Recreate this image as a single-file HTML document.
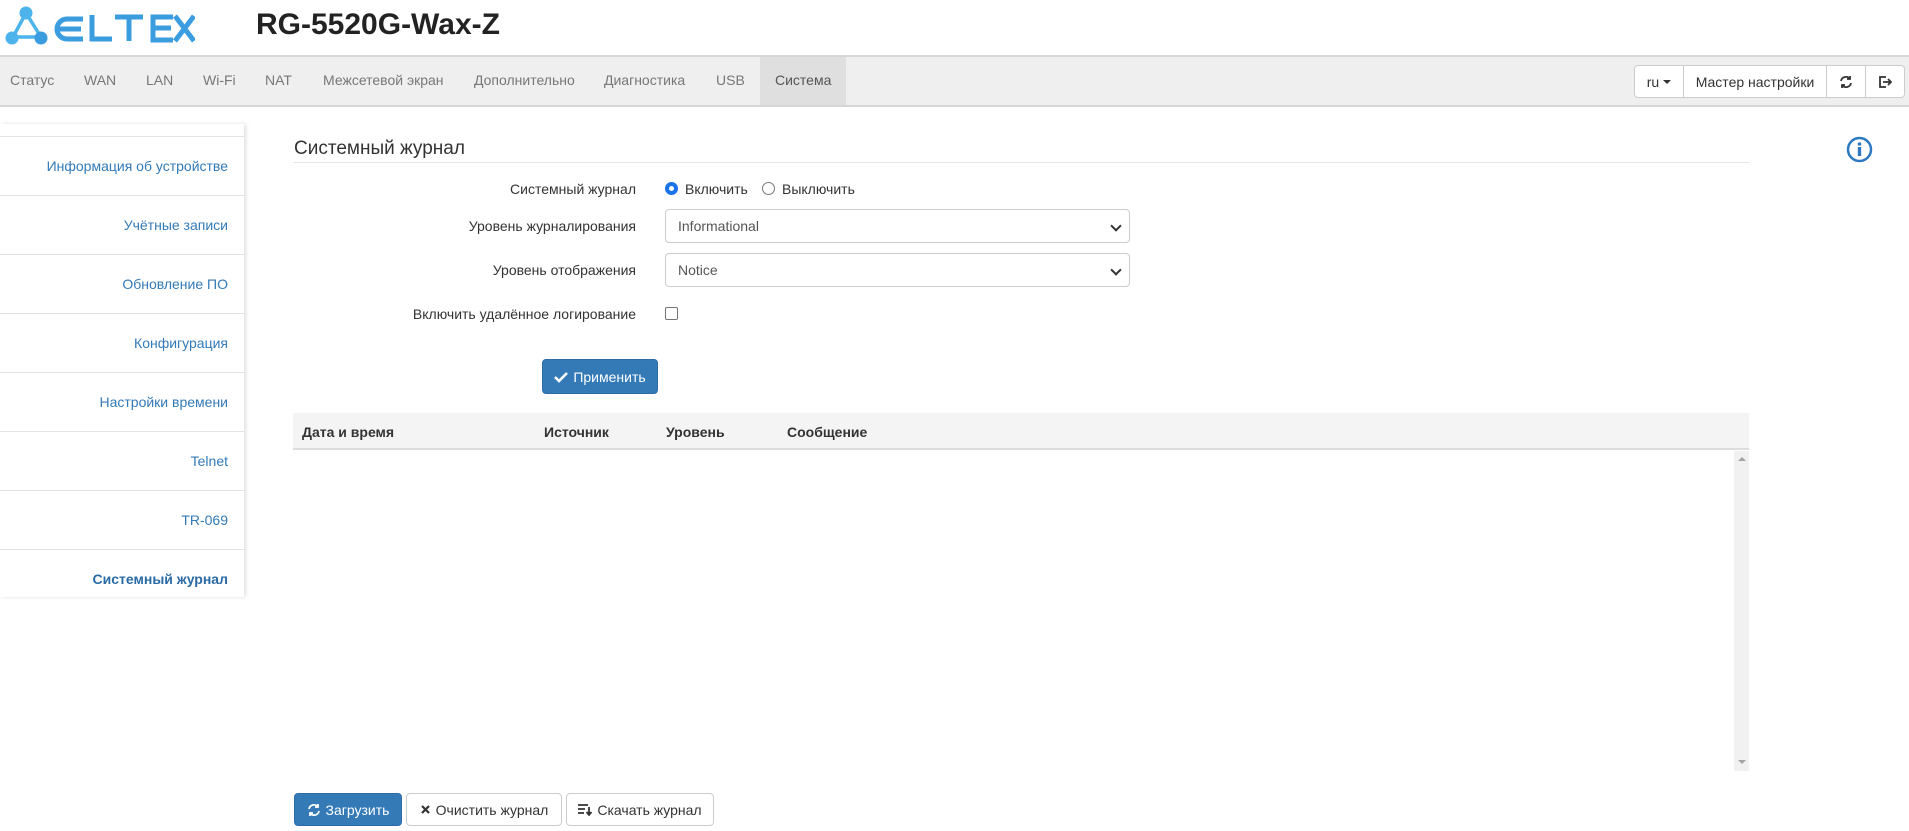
<!DOCTYPE html>
<html><head><meta charset="utf-8"><style>
*{box-sizing:border-box;margin:0;padding:0}
body{width:1909px;height:831px;background:#fff;font-family:"Liberation Sans",Arial,sans-serif;font-size:14px;color:#333;position:relative;overflow:hidden}
.a{position:absolute}
.nav{left:0;top:55px;width:1909px;height:52px;background:#efefef;border-top:2px solid #d6d6d6;border-bottom:2px solid #d6d6d6}
.nav span{position:absolute;top:15px;color:#777;font-size:14px}
.act{left:760px;top:0;width:86px;height:48px;background:#dfdfdf}
.rb{top:8px;height:33px;border:1px solid #ccc;background:#fff;display:flex;align-items:center;justify-content:center;font-size:14px;color:#333}
.side{left:0;top:124px;width:244px;height:473px;box-shadow:2px 0 4px rgba(0,0,0,.12)}
.si{position:absolute;left:0;width:244px;height:59px;border-top:1px solid #e3e3e3;text-align:right;padding-right:16px;line-height:58px;color:#337ab7;font-size:14px}
.lbl{position:absolute;right:calc(1909px - 636px);font-size:14px;color:#333}
.sel{position:absolute;left:665px;width:465px;height:34px;border:1px solid #ccc;border-radius:4px;padding:0 12px;line-height:32px;font-size:14px;color:#555;background:#fff}
.sel:after{content:"";position:absolute;right:9px;top:12px;width:6px;height:6px;border-right:2px solid #333;border-bottom:2px solid #333;transform:rotate(45deg)}
.btn{position:absolute;top:793px;height:33px;border:1px solid #ccc;border-radius:4px;display:flex;align-items:center;justify-content:center;font-size:14px;color:#333;background:#fff;gap:5px}
.th{position:absolute;top:11px;font-weight:bold;font-size:14px;color:#333}
</style></head><body>
<svg class="a" style="left:5px;top:5px" width="190" height="42" viewBox="0 0 190 42">
<g stroke="#4cb4ea" stroke-width="3.5" fill="none"><line x1="21" y1="8" x2="8" y2="32"/><line x1="21" y1="8" x2="36" y2="32"/><line x1="8" y1="32" x2="36" y2="32"/></g>
<circle cx="21" cy="8" r="6.5" fill="#4cb4ea"/><circle cx="7" cy="33" r="6.5" fill="#4cb4ea"/><circle cx="36" cy="33" r="6.5" fill="#3a9de0"/>
<g stroke="#3b9ce0" stroke-width="5" fill="none" stroke-linecap="butt">
<path d="M78 14H62a10 10 0 0 0 0 20h16M52 24h24"/>
<path d="M87 10v24h20"/>
<path d="M110 12h28M124 12v24"/>
<path d="M168 12h-20v23h20M148 23h18"/>
<path d="M170 11l19 25M189 11l-19 25"/>
</g></svg>
<div class="a" style="left:256px;top:8px;font-size:30px;font-weight:bold;color:#222">RG-5520G-Wax-Z</div>
<div class="a nav">
<div class="a act"></div>
<span style="left:10px">Статус</span><span style="left:84px">WAN</span><span style="left:146px">LAN</span><span style="left:203px">Wi-Fi</span><span style="left:265px">NAT</span><span style="left:323px">Межсетевой экран</span><span style="left:474px">Дополнительно</span><span style="left:604px">Диагностика</span><span style="left:716px">USB</span><span style="left:775px;color:#555">Система</span>
<div class="a rb" style="left:1634px;width:50px;border-radius:4px 0 0 4px">ru <span style="position:static;margin-left:4px;border-left:4px solid transparent;border-right:4px solid transparent;border-top:4px solid #333"></span></div>
<div class="a rb" style="left:1683px;width:144px">Мастер настройки</div>
<div class="a rb" style="left:1826px;width:40px"><svg width="14" height="14" viewBox="0 0 14 14" fill="none" stroke="#333" stroke-width="1.8"><path d="M2 6a5 5 0 0 1 9-2M12 8a5 5 0 0 1-9 2"/><path d="M11 1v3H8M3 13v-3h3"/></svg></div>
<div class="a rb" style="left:1865px;width:40px;border-radius:0 4px 4px 0"><svg width="14" height="14" viewBox="0 0 14 14" fill="none" stroke="#333" stroke-width="1.8"><path d="M8 2H2v10h6M5 7h8M10 4l3 3-3 3"/></svg></div>
</div>
<div class="a side">
<div class="si" style="top:12px">Информация об устройстве</div>
<div class="si" style="top:71px">Учётные записи</div>
<div class="si" style="top:130px">Обновление ПО</div>
<div class="si" style="top:189px">Конфигурация</div>
<div class="si" style="top:248px">Настройки времени</div>
<div class="si" style="top:307px">Telnet</div>
<div class="si" style="top:366px">TR-069</div>
<div class="si" style="top:425px;font-weight:bold;color:#2a6aa5">Системный журнал</div>
</div>
<div class="a" style="left:294px;top:138px;font-size:19px;color:#333">Системный журнал</div>
<div class="a" style="left:293px;top:162px;width:1456px;height:1px;background:#e5e5e5"></div>
<svg class="a" style="left:1846px;top:136px" width="27" height="27" viewBox="0 0 27 27"><circle cx="13.5" cy="13.5" r="11.5" fill="none" stroke="#2d7ac0" stroke-width="2.5"/><circle cx="13.5" cy="8" r="1.8" fill="#2d7ac0"/><rect x="11.8" y="11" width="3.4" height="9" fill="#2d7ac0"/></svg>
<div class="lbl" style="top:181px">Системный журнал</div>
<div class="a" style="left:665px;top:182px;width:13px;height:13px;border-radius:50%;border:4px solid #1a73e8;background:#fff"></div>
<div class="a" style="left:685px;top:181px">Включить</div>
<div class="a" style="left:762px;top:182px;width:13px;height:13px;border-radius:50%;border:1px solid #767676"></div>
<div class="a" style="left:782px;top:181px">Выключить</div>
<div class="lbl" style="top:218px">Уровень журналирования</div>
<div class="sel" style="top:209px">Informational</div>
<div class="lbl" style="top:262px">Уровень отображения</div>
<div class="sel" style="top:253px">Notice</div>
<div class="lbl" style="top:306px">Включить удалённое логирование</div>
<div class="a" style="left:665px;top:307px;width:13px;height:13px;border:1px solid #767676;border-radius:2px"></div>
<div class="btn" style="left:542px;top:359px;width:116px;height:35px;background:#337ab7;border-color:#2e6da4;color:#fff"><svg width="14" height="12" viewBox="0 0 14 12"><path d="M1 6l4 4 8-8" fill="none" stroke="#fff" stroke-width="2.6"/></svg>Применить</div>
<div class="a" style="left:293px;top:413px;width:1456px;height:37px;background:#f4f4f4;border-bottom:2px solid #ddd">
<span class="th" style="left:9px">Дата и время</span><span class="th" style="left:251px">Источник</span><span class="th" style="left:373px">Уровень</span><span class="th" style="left:494px">Сообщение</span>
</div>
<div class="a" style="left:1734px;top:451px;width:15px;height:320px;background:#f1f1f1">
<div class="a" style="left:4px;top:6px;border-left:4px solid transparent;border-right:4px solid transparent;border-bottom:4px solid #a3a3a3"></div>
<div class="a" style="left:4px;top:309px;border-left:4px solid transparent;border-right:4px solid transparent;border-top:4px solid #a3a3a3"></div>
</div>
<div class="btn" style="left:294px;width:108px;background:#337ab7;border-color:#2e6da4;color:#fff"><svg width="14" height="14" viewBox="0 0 14 14" fill="none" stroke="#fff" stroke-width="1.8"><path d="M2 6a5 5 0 0 1 9-2M12 8a5 5 0 0 1-9 2"/><path d="M11 1v3H8M3 13v-3h3"/></svg>Загрузить</div>
<div class="btn" style="left:406px;width:156px"><svg width="11" height="11" viewBox="0 0 11 11"><path d="M2 2l7 7M9 2l-7 7" stroke="#333" stroke-width="2.2"/></svg>Очистить журнал</div>
<div class="btn" style="left:566px;width:148px"><svg width="14" height="13" viewBox="0 0 14 13"><path d="M0 2h10M0 6h7M0 10h6" stroke="#333" stroke-width="1.8"/><path d="M11 4v7M8.5 9l2.5 3 2.5-3" stroke="#333" stroke-width="1.8" fill="none"/></svg>Скачать журнал</div>
</body></html>
